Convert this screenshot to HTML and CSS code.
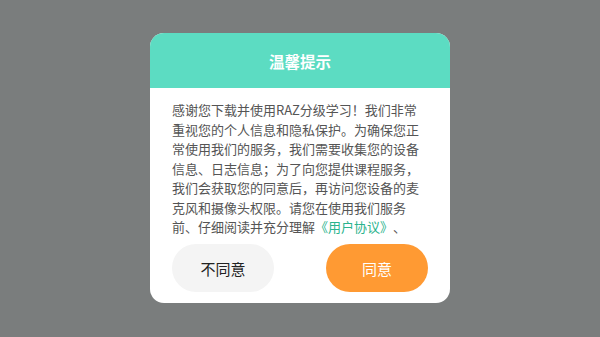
FILE: index.html
```html
<!DOCTYPE html>
<html lang="zh-CN">
<head>
<meta charset="utf-8">
<title>温馨提示</title>
<link rel="stylesheet" href="styles.css">
</head>
<body>
<div class="overlay">
  <div class="dialog">
    <div class="dialog-header">温馨提示</div>
    <div class="dialog-body">
      <p class="body-text">感谢您下载并使用RAZ分级学习！我们非常重视您的个人信息和隐私保护。为确保您正常使用我们的服务，我们需要收集您的设备信息、日志信息；为了向您提供课程服务，我们会获取您的同意后，再访问您设备的麦克风和摄像头权限。请您在使用我们服务前、仔细阅读并充分理解<span class="link">《用户协议》</span>、<span class="link">《隐私政策》</span>，了解我们对您个人信息的处理规则。如您同意，请点击“同意”开始接受我们的服务。</p>
    </div>
    <div class="dialog-actions">
      <button class="btn btn-decline">不同意</button>
      <button class="btn btn-accept">同意</button>
    </div>
  </div>
</div>
</body>
</html>
```

FILE: styles.css
```css
html, body {
  margin: 0;
  padding: 0;
}
body {
  width: 600px;
  height: 337px;
  overflow: hidden;
  font-family: "Noto Sans CJK SC", "Noto Sans", sans-serif;
}
.overlay {
  width: 600px;
  height: 337px;
  background: #7a7d7d;
  display: flex;
  justify-content: center;
  padding-top: 33px;
  box-sizing: border-box;
}
.dialog {
  width: 300px;
  height: 270px;
  background: #ffffff;
  border-radius: 14px;
  overflow: hidden;
  display: flex;
  flex-direction: column;
}
.dialog-header {
  height: 55px;
  flex: none;
  background: #5cdcc2;
  color: #ffffff;
  font-size: 15.5px;
  font-weight: 700;
  display: flex;
  align-items: center;
  justify-content: center;
  padding-top: 1px;
  box-sizing: border-box;
}
.dialog-body {
  padding: 12px 22px 0 22px;
  height: 149px;
  box-sizing: border-box;
  flex: none;
  overflow: hidden;
}
.body-text {
  margin: 0;
  font-size: 13px;
  line-height: 19.5px;
  color: #555555;
  height: 137px;
  overflow: hidden;
  text-spacing-trim: space-all;
  line-break: strict;
}
.link {
  color: #2bb38d;
}
.dialog-actions {
  display: flex;
  justify-content: space-between;
  padding: 7px 22px 0 22px;
}
.btn {
  width: 102px;
  height: 48px;
  border: none;
  border-radius: 24px;
  font-family: "Noto Sans CJK SC", "Noto Sans", sans-serif;
  font-size: 15px;
  padding: 0;
}
.btn-decline {
  background: #f4f4f4;
  color: #222222;
}
.btn-accept {
  background: #ff9a33;
  color: #ffffff;
}
```
